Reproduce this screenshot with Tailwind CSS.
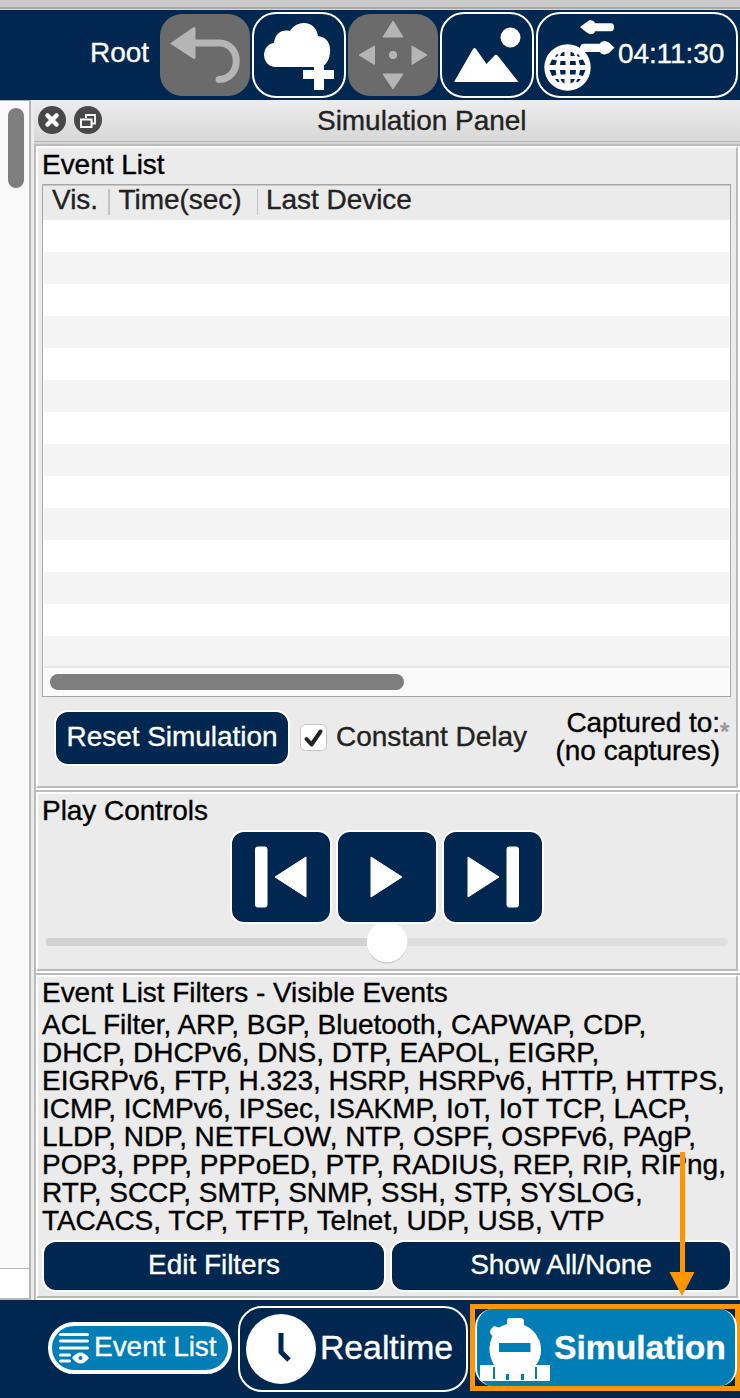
<!DOCTYPE html>
<html lang="en">
<head>
<meta charset="utf-8">
<title>Simulation Panel</title>
<script src="https://cdn.jsdelivr.net/npm/@tailwindcss/browser@4"></script>
</head>
<body class="w-[740px] h-[1398px] overflow-hidden bg-[#ebebeb] text-[28px] leading-7 tracking-[-0.04px] text-black whitespace-nowrap font-['Liberation_Sans',Arial,sans-serif]">
<div class="relative flex h-[1398px] w-[740px] flex-col [-webkit-text-stroke:0.35px]">

  <!-- Toolbar -->
  <div class="h-2.5 shrink-0 border-b border-[#d8d8d8] bg-[#cbcbcb]"><div class="h-[9px] border-b-2 border-[#aaaaaa]"></div></div>
  <header class="flex h-[90px] shrink-0 items-start bg-[#00274f] pt-0.5 text-white">
    <span class="ml-[90px] mt-[27px] w-[70px]">Root</span>
    <div class="mt-0.5 h-[82px] w-[90px] rounded-[22px] bg-[#6b6b6b]">
      <svg width="90" height="82" viewBox="160 14 90 82"><path d="M170 43.500L193 27.500Q195.500 26 195.500 29V57Q195.500 60 193 58.500Z" fill="#b5b5b5"/><path d="M192 43H219C242 43 242 79 219 79.500" fill="none" stroke="#b5b5b5" stroke-width="7" stroke-linecap="round"/></svg>
    </div>
    <div class="ml-0.5 h-[86px] w-[94px] rounded-[24px] border-2 border-white">
      <svg width="90" height="82" viewBox="254 14 90 82" fill="#fff"><path d="M276 67C261 67 260 45 274 43C275 34 281 29 290 31C297 19 316 20 318 36C327 37 331 44 330 53C329 62 325 66 320 67Z"/><path d="M314 60h10v10h10v9h-10v11h-10v-11h-11v-9h11z"/></svg>
    </div>
    <div class="ml-0.5 mt-0.5 h-[82px] w-[90px] rounded-[22px] bg-[#6b6b6b]">
      <svg width="90" height="82" viewBox="348 14 90 82" fill="#b5b5b5" stroke="#b5b5b5" stroke-linejoin="round"><path d="M393 21L403 37H383ZM393 89L383 74H403ZM359 55L374.500 46V64.500ZM427 55L412 46V64.500Z"/><circle cx="393" cy="55" r="3.700"/></svg>
    </div>
    <div class="ml-0.5 h-[86px] w-[94px] rounded-[24px] border-2 border-white">
      <svg width="90" height="82" viewBox="442 14 90 82" fill="#fff"><circle cx="510.500" cy="37.500" r="10"/><path d="M454 82L473 49Q474.500 47 476 49L486.500 64L494 56Q496 53.500 498 56L518.500 82Z"/></svg>
    </div>
    <div class="ml-0.5 flex h-[86px] w-[202px] rounded-[24px] border-2 border-white">
      <svg class="shrink-0" width="80" height="82" viewBox="538 14 80 82" fill="#fff"><path d="M580 27L586 22.500L590 20Q594.500 20.500 595 23.200H611Q614 23.200 614 27.200T611 31.200H595Q594.500 34 590 34.200L586 32ZM614.500 47.700L609 42.500L605 41Q601 41 600 43.800H584Q580 44 580 48T584 52H600Q601 54.500 605 54.500L609 53Z"/><circle cx="567.500" cy="67.500" r="23.200"/><g fill="#00274f"><path d="M561.500 53L564.500 51.500V56H560ZM570.500 51.500L573.500 53L575 56H570.500ZM557 54L558.500 55L556.500 57L555 56.500ZM578 54L576.500 55L578.500 57L580 56.500Z"/><path d="M552 59.500L557 60.500L555.500 65H549.500ZM560.500 61H565.500V65H560ZM570 61H575.500L576 65H570ZM583 59.500L578.500 60.500L580 65H585.500ZM549.500 70H555.500L556.500 75L552 76ZM560 70H565.500V74.500H560.500ZM570 70H576L575.500 74.500H570ZM580 70H585.500L583 76L579 75Z"/><path d="M555 79H558L559.500 82L557.500 82ZM560.500 79H564.500V83.500L562 82ZM570.500 79H575L573.500 82L570.500 83.500ZM577.500 79H581L578 82L576 82Z"/></g></svg>
      <span class="mt-[26px] tracking-[-0.1px]">04:11:30</span>
    </div>
  </header>

  <main class="flex h-[1200px] shrink-0">
    <!-- Workspace scrollbar -->
    <aside class="flex w-[31px] flex-col border-r-2 border-t border-[#b5b5b5] bg-[#fafafa]">
      <div class="ml-2 mt-[7px] h-20 w-4 rounded-full bg-[#7e7e7e]"></div>
      <div class="mt-auto h-[32px] w-[29px] border-b-2 border-t border-[#b9b9b9] bg-white"></div>
    </aside>
    <section class="ml-[3px] flex w-[706px] flex-col">
      <div class="flex h-[46px] shrink-0 flex-col border-b-2 border-[#bcbcbc] bg-gradient-to-b from-[#ededed] to-[#d6d6d6]">
        <div class="flex h-[42px] shrink-0 border-b border-[#b9b9b9]">
          <svg class="ml-[3px] mt-[5px]" width="68" height="30" viewBox="37 105 68 30"><circle cx="52" cy="120" r="14" fill="#484848"/><circle cx="88" cy="120" r="14" fill="#484848"/><path d="M47.500 115.500L56.500 124.500M56.500 115.500L47.500 124.500" stroke="#fff" stroke-width="4.500" stroke-linecap="round"/><path d="M86 118V115H95V123.500H92" stroke="#fff" stroke-width="1.800" fill="none"/><rect x="81" y="119.500" width="10.500" height="7.500" stroke="#fff" stroke-width="2" fill="none"/></svg>
          <h1 class="ml-[212px] mt-[7px] text-[#222]">Simulation Panel</h1>
        </div>
      </div>
      <div class="flex h-[1154px] flex-col border-l-2 border-[#bcbcbc] bg-white">

        <!-- Event list -->
        <div class="flex h-[642px] w-[702px] shrink-0 flex-col border-2 border-t-white border-l-white border-b-[#bbb] border-r-[#bbb] bg-[#ebebeb]">
          <h2 class="ml-1 mt-[3px]">Event List</h2>
          <div class="ml-1 mt-[5px] flex h-[513px] w-[689px] shrink-0 flex-col border border-[#a6a6a6] bg-white">
            <div class="flex h-[35px] shrink-0 border-t border-[#c8c8c8] bg-[#ebebeb] text-[#222]">
              <span class="ml-[9px] w-[56px]">Vis.</span><i class="mt-[3px] h-[26px] w-[1.5px] bg-[#c4c4c4]"></i>
              <span class="ml-[9px] w-[138px]">Time(sec)</span><i class="mt-[3px] h-[26px] w-[1.5px] bg-[#c4c4c4]"></i>
              <span class="ml-2">Last Device</span>
            </div>
            <div class="mx-px h-[446px] shrink-0 bg-[repeating-linear-gradient(to_bottom,#fff_0px,#fff_32px,#f4f4f4_32px,#f4f4f4_64px)]"></div>
            <div class="mx-px grow border-t-2 border-[#e4e4e4] bg-[#fafafa] pl-1.5 pt-1.5"><div class="h-4 w-[354px] rounded-full bg-[#7e7e7e]"></div></div>
          </div>
          <div class="mt-[13px] flex">
            <button class="ml-4 flex h-14 w-[236px] justify-center rounded-[14px] border-2 border-white bg-[#00274f] pt-[11px] text-white">Reset Simulation</button>
            <svg class="ml-2.5 mt-3.5" width="28" height="28"><rect x=".5" y=".5" width="26" height="26" rx="5" fill="#fff" stroke="#c3c3c3"/><path d="M6.500 15L11.500 20.500L20.500 7.500" fill="none" stroke="#222" stroke-width="4" stroke-linecap="round" stroke-linejoin="round"/></svg>
            <span class="ml-2 mt-[13px] text-[#222]">Constant Delay</span>
            <p class="-mt-px ml-auto text-right">Captured to:<br>(no captures)</p>
            <span class="mr-[5px] mt-2 w-[11px] text-[24px] text-[#999] [-webkit-text-stroke:0.8px]">*</span>
          </div>
        </div>

        <!-- Play controls -->
        <div class="mt-0.5 h-[181px] w-[704px] shrink-0 border-t-2 border-[#bbb] bg-white">
          <div class="h-[179px] w-[702px] border-2 border-t-white border-l-white border-b-[#bbb] border-r-[#bbb] bg-[#ebebeb]">
            <h2 class="ml-1 mt-[3px]">Play Controls</h2>
            <div class="ml-48 mt-[5px] flex gap-1">
              <button class="h-[94px] w-[102px] rounded-[14px] border-2 border-white bg-[#00274f]"><svg width="98" height="90" viewBox="232 832 98 90" fill="#fff" stroke="#fff" stroke-linejoin="round"><rect x="255.500" y="847" width="11.500" height="60" rx="2"/><path d="M275 877L306 857V897Z"/></svg></button>
              <button class="h-[94px] w-[102px] rounded-[14px] border-2 border-white bg-[#00274f]"><svg width="98" height="90" viewBox="338 832 98 90" fill="#fff" stroke="#fff" stroke-linejoin="round"><path d="M402 877L371 857V897Z"/></svg></button>
              <button class="h-[94px] w-[102px] rounded-[14px] border-2 border-white bg-[#00274f]"><svg width="98" height="90" viewBox="444 832 98 90" fill="#fff" stroke="#fff" stroke-linejoin="round"><path d="M499 877L468 857V897Z"/><rect x="507" y="847" width="11.500" height="60" rx="2"/></svg></button>
            </div>
            <svg class="ml-1.5" width="690" height="42" viewBox="44 924 690 42"><rect x="46" y="938" width="682" height="8" rx="4" fill="#dfdfdf"/><path d="M50 938H387V946H50A4 4 0 0 1 50 938" fill="#d1d1d1"/><circle cx="387" cy="943.500" r="20" fill="#c9c9c9"/><circle cx="387" cy="942" r="20.300" fill="#fff"/></svg>
          </div>
        </div>

        <!-- Filters -->
        <div class="mt-0.5 h-[325px] w-[704px] shrink-0 border-t-2 border-[#bbb] bg-white">
          <div class="h-[323px] w-[702px] border-2 border-t-white border-l-white border-b-[#b9b9b9] border-r-[#bbb] bg-[#ebebeb]">
            <h2 class="mb-1 ml-1 mt-0.5">Event List Filters - Visible Events</h2>
            <p class="ml-1">ACL Filter, ARP, BGP, Bluetooth, CAPWAP, CDP,<br>DHCP, DHCPv6, DNS, DTP, EAPOL, EIGRP,<br>EIGRPv6, FTP, H.323, HSRP, HSRPv6, HTTP, HTTPS,<br>ICMP, ICMPv6, IPSec, ISAKMP, IoT, IoT TCP, LACP,<br>LLDP, NDP, NETFLOW, NTP, OSPF, OSPFv6, PAgP,<br>POP3, PPP, PPPoED, PTP, RADIUS, REP, RIP, RIPng,<br>RTP, SCCP, SMTP, SNMP, SSH, STP, SYSLOG,<br>TACACS, TCP, TFTP, Telnet, UDP, USB, VTP</p>
            <div class="ml-1 mt-[5px] flex gap-1 text-white">
              <button class="flex h-[52px] w-[344px] justify-center rounded-[14px] border-2 border-white bg-[#00274f] pt-[9px]">Edit Filters</button>
              <button class="flex h-[52px] w-[342px] justify-center rounded-[14px] border-2 border-white bg-[#00274f] pt-[9px]">Show All/None</button>
            </div>
          </div>
        </div>
      </div>
    </section>
  </main>

  <!-- Mode bar -->
  <footer class="flex h-[98px] shrink-0 items-start bg-[#00274f] text-white">
    <button class="ml-12 mt-[22px] flex h-[52px] w-[184px] rounded-full border-4 border-white bg-[#007eb5]">
      <svg class="shrink-0" width="42" height="44" viewBox="52 1326 42 44"><path d="M60.500 1334.500H87.500M60.500 1341H87.500M60.500 1348H87.500M60.500 1355H69.500M60.500 1361H69.500" stroke="#fff" stroke-width="3" stroke-linecap="round"/><path d="M72 1358Q80.500 1347 89 1358Q80.500 1369 72 1358Z" fill="#fff"/><circle cx="80.500" cy="1358" r="2" fill="#007eb5"/></svg>
      <span class="mt-[7px]">Event List</span>
    </button>
    <button class="ml-1.5 mt-1.5 flex h-[86px] w-[230px] rounded-[24px] border-2 border-white text-[33.800px] leading-[34px]">
      <svg class="shrink-0" width="80" height="82" viewBox="240 1308 80 82"><circle cx="281" cy="1349" r="35" fill="#fff"/><path d="M281 1333V1352L289 1360" fill="none" stroke="#00274f" stroke-width="5"/></svg>
      <span class="mt-[22px]">Realtime</span>
    </button>
    <div class="ml-[2px] mt-1 h-[87px] w-[270px] border-[5px] border-[#ff9500]">
      <button class="flex h-[77px] w-[262px] rounded-[18px] border-x-2 border-white bg-[#007eb5] text-[33.700px] leading-[34px] font-bold">
        <svg class="shrink-0" width="77" height="77" viewBox="477 1309 77 77" fill="#fff"><path d="M507 1321Q507 1318 510 1318H520Q524 1318 524 1321V1325Q534 1329 538 1338Q541 1342 541 1350Q541 1359 536 1365H550V1381H480V1365H494Q489 1356 489.500 1347Q490 1341 492.500 1336Q488.500 1333 491 1329L494 1326L499 1327.500Q503 1325 507 1324Z"/><path d="M499 1343H530.500V1352H499ZM493 1367h2v12h-2zM506 1374h3v6h-3zM521 1374h3v6h-3zM535 1367h2v12h-2z" fill="#007eb5"/></svg>
        <span class="mt-[21px]">Simulation</span>
      </button>
    </div>
  </footer>

  <!-- Callout arrow -->
  <svg class="absolute left-[669px] top-[1150px]" width="28" height="148" viewBox="669 1150 28 148"><path d="M682.500 1152V1275" stroke="#ff9500" stroke-width="5"/><path d="M669.500 1272H694.500L682 1296Z" fill="#ff9500"/></svg>
</div>
</body>
</html>
